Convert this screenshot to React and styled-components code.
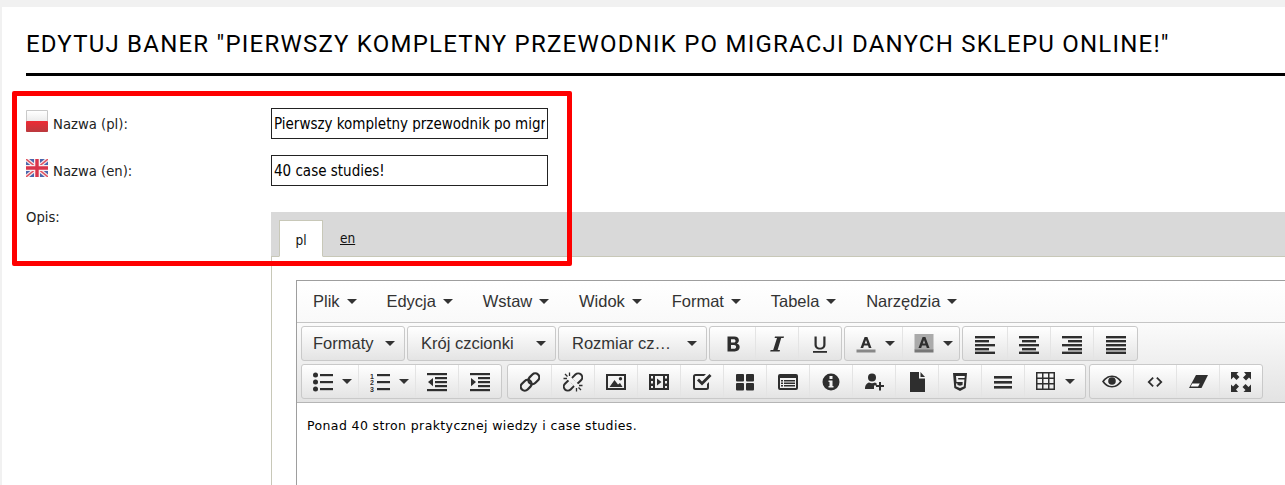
import styled, { createGlobalStyle } from "styled-components";

const GlobalStyle = createGlobalStyle`
  html, body { margin: 0; padding: 0; background: #f1f1f1; overflow: hidden; }
  body { height: 485px; }
`;

const Page = styled.div`
  position: relative;
  width: 1283px;
  height: 478px;
  margin: 7px 0 0 2px;
  background: #fff;
  overflow: hidden;
  font-family: "DejaVu Sans", sans-serif;
  font-stretch: condensed;
  color: #1a1a1a;
`;

const Title = styled.h1`
  margin: 0 0 0 24px;
  height: 69px;
  box-sizing: border-box;
  padding-top: 22px;
  border-bottom: 3px solid #000;
  font: 400 24px/30px Roboto, sans-serif;
  font-stretch: normal;
  letter-spacing: 1.22px;
  color: #000;
  white-space: nowrap;
`;

const Form = styled.div`
  padding: 32px 0 0 24px;
`;

const Row = styled.div`
  display: grid;
  grid-template-columns: 245px 277px;
  height: 47px;
`;

const Label = styled.label`
  display: flex;
  align-items: center;
  gap: 5px;
  height: 31px;
  font-size: 14.7px;
  color: #222;
`;

const FlagBox = styled.span`
  display: flex;
  margin-bottom: 5px;
`;

const TextInput = styled.input`
  box-sizing: border-box;
  width: 277px;
  height: 31px;
  padding: 0 2px;
  border: 1px solid #222;
  border-radius: 0;
  outline: none;
  background: #fff;
  font-family: "DejaVu Sans", sans-serif;
  font-stretch: condensed;
  font-size: 15px;
  color: #000;
`;

const EditorRow = styled.div`
  display: grid;
  grid-template-columns: 245px 1100px;
  padding-top: 10px;
`;

const OpisLabel = styled.div`
  font-size: 14.7px;
  color: #222;
  margin-top: -4px;
`;

const Tabs = styled.div`
  display: flex;
  align-items: flex-end;
  height: 45px;
  box-sizing: border-box;
  padding-left: 8px;
  background: #d9d9d9;
  border-bottom: 1px solid #c8c8b8;
`;

const Tab = styled.span`
  box-sizing: border-box;
  width: ${(p) => (p.$active ? "44px" : "auto")};
  height: ${(p) => (p.$active ? "37px" : "36px")};
  margin-bottom: ${(p) => (p.$active ? "-1px" : "0")};
  margin-left: ${(p) => (p.$active ? "0" : "17px")};
  padding-top: ${(p) => (p.$active ? "11px" : "10px")};
  text-align: center;
  font-size: 13.5px;
  color: #111;
  background: ${(p) => (p.$active ? "#fff" : "transparent")};
  border: ${(p) => (p.$active ? "1px solid #c8c8b8" : "none")};
  border-bottom: ${(p) => (p.$active ? "1px solid #fff" : "none")};
  text-decoration: ${(p) => (p.$active ? "none" : "underline")};
`;

const TabBody = styled.div`
  border-left: 1px solid #c8c8b8;
  padding: 23px 0 0 24px;
  height: 240px;
`;

const Editor = styled.div`
  border: 1px solid #9e9e9e;
  border-right: none;
  height: 240px;
  font-family: "Liberation Sans", Arial, sans-serif;
  font-stretch: normal;
`;

const MenuBar = styled.div`
  display: flex;
  height: 41px;
  align-items: center;
  padding-left: 16px;
  gap: 29.8px;
  background: linear-gradient(#fff, #f9f9f9);
  border-bottom: 1px solid #c5c5c5;
`;

const MenuItem = styled.span`
  display: flex;
  align-items: center;
  gap: 7px;
  font-size: 16.5px;
  color: #333;
`;

const Caret = styled.i`
  display: block;
  flex: none;
  width: 0;
  height: 0;
  border-left: 5px solid transparent;
  border-right: 5px solid transparent;
  border-top: 5px solid #333;
`;

const Toolbar = styled.div`
  height: 80px;
  box-sizing: border-box;
  padding: 3px 0 0 4px;
  background: linear-gradient(#fbfbfb, #e3e3e3);
  border-bottom: 1px solid #b5b5b5;
`;

const ToolRow = styled.div`
  display: flex;
  gap: 2px;
  height: 35px;
  margin-bottom: 3px;
`;

const Group = styled.div`
  display: flex;
  box-sizing: border-box;
  height: 35px;
  margin-left: ${(p) => p.$shift || 0}px;
  border: 1px solid #c9c9c9;
  border-radius: 3px;
  background: linear-gradient(#fff, #e4e4e4);
`;

const ToolButton = styled.div`
  display: flex;
  align-items: center;
  justify-content: ${(p) => (p.$caret ? "flex-start" : "center")};
  gap: 9px;
  box-sizing: border-box;
  width: ${(p) => p.$w || 43}px;
  height: 33px;
  padding-left: ${(p) => (p.$caret ? "11px" : "0")};
  & + & { border-left: 1px solid #e4e4e4; }
`;

const SelectButton = styled.div`
  display: flex;
  align-items: center;
  justify-content: space-between;
  box-sizing: border-box;
  width: ${(p) => p.$w}px;
  height: 33px;
  padding: 0 9px 0 ${(p) => p.$pad || 13}px;
  font-size: 16.5px;
  color: #333;
`;

const Content = styled.div`
  padding: 15px 10px;
  font: 12.5px/16px "DejaVu Sans", Verdana, sans-serif;
  letter-spacing: 0.39px;
  color: #000;
`;

// red frame drawn over the form in the screenshot
const Highlight = styled.div`
  position: absolute;
  left: 10px;
  top: 84px;
  width: 560px;
  height: 175px;
  box-sizing: border-box;
  border: 5px solid #fe0000;
  border-radius: 2px;
  pointer-events: none;
`;

const Svg = ({ children }) => (
  <svg width="20" height="20" viewBox="0 0 20 20" fill="#2e2e2e" stroke="none">{children}</svg>
);

const FlagPl = () => (
  <svg width="22" height="22" viewBox="0 0 22 22">
    <defs>
      <linearGradient id="plWhite" x1="0" y1="0" x2="0" y2="1">
        <stop offset="0" stopColor="#fff" />
        <stop offset="1" stopColor="#ececec" />
      </linearGradient>
      <linearGradient id="plRed" x1="0" y1="0" x2="0" y2="1">
        <stop offset="0" stopColor="#ee2a34" />
        <stop offset="1" stopColor="#bb3a3e" />
      </linearGradient>
    </defs>
    <rect width="22" height="22" rx="1" fill="#c9c9c9" />
    <rect x="1" y="1" width="20" height="10" fill="url(#plWhite)" />
    <rect y="11" width="22" height="11" rx="1" fill="url(#plRed)" />
  </svg>
);

const FlagEn = () => (
  <svg width="22" height="18" viewBox="0 0 22 18">
    <rect width="22" height="18" fill="#4a66ad" />
    <path d="M0 0 22 18M22 0 0 18" stroke="#f4e8ea" strokeWidth="4" />
    <path d="M0 0 22 18M22 0 0 18" stroke="#e0505f" strokeWidth="1.4" />
    <path d="M11 0V18M0 9H22" stroke="#f7eef0" strokeWidth="6" />
    <path d="M11 0V18M0 9H22" stroke="#d9354a" strokeWidth="3.4" />
  </svg>
);

const Lines = ({ rows }) => (
  <Svg>
    {rows.map(([x, y, w, t = 2.4], i) => <rect key={i} x={x} y={y} width={w} height={t} />)}
  </Svg>
);

const letterA = "M8.600 3h2.800l4.100 11h-2.700l-.8-2.400H8l-.8 2.400H4.500L8.600 3zm1.400 3L8.700 9.600h2.600L10 6z";

const icons = {
  bold: <Svg><path d="M4.500 2.500h6.800c2.900 0 4.600 1.400 4.600 3.800 0 1.500-.8 2.700-2.100 3.200 1.700.4 2.900 1.700 2.900 3.600 0 2.700-2 4.400-5 4.400H4.500v-15zm3.500 2.800v3.200h2.600c1.200 0 1.900-.6 1.900-1.600s-.7-1.600-1.900-1.600H8zm0 5.800v3.600h3c1.300 0 2.100-.7 2.100-1.800s-.8-1.800-2.100-1.800H8z" /></Svg>,
  italic: <Svg><path d="M8 2.500h9l-.4 1.400h-2.400L10.600 16h2.400l-.4 1.500H3.200l.4-1.500h2.600L10 3.900H7.600z" /></Svg>,
  underline: <Svg><path d="M4.500 2.500h2.200v8c0 2.200 1.300 3.200 3.300 3.200s3.300-1 3.300-3.200v-8h2.200v8c0 3.200-2.200 5-5.500 5s-5.500-1.800-5.500-5v-8z" /><rect x="3" y="17" width="14" height="1.800" /></Svg>,
  color: <Svg><path d={letterA} /><rect x="0.500" y="15.500" width="19" height="3" fill="#888" /></Svg>,
  bg: <Svg><rect x="0.500" y="0" width="19" height="16" fill="#aaa" /><path d={letterA} /><rect x="0.500" y="15.500" width="19" height="3" fill="#777" /></Svg>,
  left: <Lines rows={[[0, 2, 20], [0, 6, 14], [0, 10, 20], [0, 14, 14], [0, 17.600, 20]]} />,
  center: <Lines rows={[[0, 2, 20], [3, 6, 14], [0, 10, 20], [3, 14, 14], [0, 17.600, 20]]} />,
  right: <Lines rows={[[0, 2, 20], [6, 6, 14], [0, 10, 20], [6, 14, 14], [0, 17.600, 20]]} />,
  justify: <Lines rows={[[0, 2, 20], [0, 6, 20], [0, 10, 20], [0, 14, 20], [0, 17.600, 20]]} />,
  bullist: <Svg><circle cx="2.500" cy="3" r="2.500" /><circle cx="2.500" cy="10" r="2.500" /><circle cx="2.500" cy="17" r="2.500" /><rect x="7" y="2" width="13" height="2.200" /><rect x="7" y="9" width="13" height="2.200" /><rect x="7" y="16" width="13" height="2.200" /></Svg>,
  numlist: <Svg><text x="0" y="6.500" fontSize="7" fontWeight="700" fontFamily="Liberation Sans">1</text><text x="0" y="13" fontSize="7" fontWeight="700" fontFamily="Liberation Sans">2</text><text x="0" y="19.500" fontSize="7" fontWeight="700" fontFamily="Liberation Sans">3</text><rect x="7" y="2" width="13" height="2.200" /><rect x="7" y="9" width="13" height="2.200" /><rect x="7" y="16" width="13" height="2.200" /></Svg>,
  outdent: <Svg><rect y="1" width="20" height="2.200" /><rect x="8" y="5" width="12" height="2.200" /><rect x="8" y="9" width="12" height="2.200" /><rect x="8" y="13" width="12" height="2.200" /><rect y="17" width="20" height="2.200" /><path d="M6 6v8.200L1 10z" /></Svg>,
  indent: <Svg><rect y="1" width="20" height="2.200" /><rect x="8" y="5" width="12" height="2.200" /><rect x="8" y="9" width="12" height="2.200" /><rect x="8" y="13" width="12" height="2.200" /><rect y="17" width="20" height="2.200" /><path d="M1 6v8.200l5-4.100z" /></Svg>,
  link: <Svg><g fill="none" stroke="#2e2e2e" strokeWidth="2.200"><rect x="9.800" y="0.800" width="8" height="12" rx="4" transform="rotate(45 13.800 6.800)" /><rect x="2.200" y="7.200" width="8" height="12" rx="4" transform="rotate(45 6.200 13.200)" /></g></Svg>,
  unlink: (
    <Svg>
      <mask id="unlinkGap">
        <rect width="20" height="20" fill="#fff" />
        <path d="M5 5 15 15" stroke="#000" strokeWidth="4" />
      </mask>
      <g fill="none" stroke="#2e2e2e" strokeWidth="2" mask="url(#unlinkGap)">
        <rect x="9.800" y="0.800" width="8" height="12" rx="4" transform="rotate(45 13.800 6.800)" />
        <rect x="2.200" y="7.200" width="8" height="12" rx="4" transform="rotate(45 6.200 13.200)" />
      </g>
      <g fill="none" stroke="#2e2e2e" strokeWidth="1.300">
        <path d="M6.500 .5v3.500M.5 6.500H4M2 2l2.500 2.500M13.500 19.500V16M19.500 13.500H16M18 18l-2.500-2.500" />
      </g>
    </Svg>
  ),
  image: <Svg><path fillRule="evenodd" d="M0 2h20v16H0zM2 4v12h16V4z" /><path d="M3.500 15l5-7 3.500 4.500 2-1.500 2.500 4z" /><circle cx="14.500" cy="6.800" r="1.700" /></Svg>,
  media: <Svg><path fillRule="evenodd" d="M0 2h20v16H0zM2 4v2.500h2V4zM2 9v2.500h2V9zM2 14v2h2v-2zM16 4v2.500h2V4zM16 9v2.500h2V9zM16 14v2h2v-2zM6 4v12h8V4z" /><path d="M8 6.500v7l4.500-3.500z" /></Svg>,
  check: <Svg><path d="M3.500 2H14l-2 2H3.500C3.200 4 3 4.200 3 4.500v11c0 .3.200.5.500.5h11c.3 0 .5-.2.500-.5V12l2-2v5.500a2.500 2.500 0 0 1-2.500 2.500h-11A2.500 2.500 0 0 1 1 15.500v-11A2.500 2.500 0 0 1 3.500 2z" /><path d="M5 8.500l2-2 3 3 7.500-7.500 2 2L10 13.500z" /></Svg>,
  grid: <Svg><rect x="1" y="2" width="8" height="7.500" rx="1" /><rect x="11" y="2" width="8" height="7.500" rx="1" /><rect x="1" y="11" width="8" height="7.500" rx="1" /><rect x="11" y="11" width="8" height="7.500" rx="1" /></Svg>,
  template: <Svg><path fillRule="evenodd" d="M2 2h16a2 2 0 0 1 2 2v12a2 2 0 0 1-2 2H2a2 2 0 0 1-2-2V4a2 2 0 0 1 2-2zM2 6v10h16V6z" /><rect x="3" y="8" width="2" height="1.500" /><rect x="6" y="8" width="11" height="1.500" /><rect x="3" y="10.500" width="2" height="1.500" /><rect x="6" y="10.500" width="11" height="1.500" /><rect x="3" y="13" width="2" height="1.500" /><rect x="6" y="13" width="11" height="1.500" /></Svg>,
  info: <Svg><path fillRule="evenodd" d="M10 1.500a8.500 8.500 0 1 1 0 17 8.500 8.500 0 0 1 0-17zM8.500 4v3h3V4zM7.500 8.500V10h1v4h-1v1.500h5V14h-1V8.500z" /></Svg>,
  user: <Svg><circle cx="8" cy="5.500" r="4" /><path d="M1 17c0-4 2-6 4-6.500 2 1 4 1 6 0 .6.200 1.200.600 1.700 1v2h-2.700v3.500z" /><rect x="12" y="13" width="8" height="2" /><rect x="15" y="10" width="2" height="8.500" /></Svg>,
  doc: <Svg><path d="M3 0h9v6.500h6V20H3z" /><path d="M13.500 0 18 5h-4.500z" /></Svg>,
  html5: <Svg><path fillRule="evenodd" d="M3 1h14l-1.300 15L10 19l-5.700-3zM6 4l.5 6h6.200l-.2 3-2.500.8-2.500-.8-.1-1.500H6l.2 3L10 16l3.800-1.500.6-7H8.300L8.100 6h6.500l.2-2z" /></Svg>,
  hr: <Lines rows={[[1, 4, 18, 2.600], [1, 9, 18, 2.600], [1, 14, 18, 2.600]]} />,
  table: <Svg><path fillRule="evenodd" d="M0 0h19v18H0zM1.500 1.500v4H6v-4zM7.500 1.500v4H12v-4zM13.500 1.500v4h4v-4zM1.500 7v4H6V7zM7.500 7v4H12V7zM13.500 7v4h4V7zM1.500 12.500v4H6v-4zM7.500 12.500v4H12v-4zM13.500 12.500v4h4v-4z" /></Svg>,
  eye: <Svg><path fillRule="evenodd" d="M10 3.500c4.500 0 8 3 10 6-2 3-5.500 6-10 6s-8-3-10-6c2-3 5.500-6 10-6zM10 5c-3.300 0-6 2-7.900 4.500C4 12 6.700 14 10 14s6-2 7.900-4.500C16 7 13.300 5 10 5z" /><circle cx="10" cy="9" r="3.800" /></Svg>,
  code: <Svg><path d="M7.500 5 8.800 6.300 5 10l3.800 3.700L7.500 15l-5-5zM12.500 5l5 5-5 5-1.300-1.300L15 10l-3.800-3.700z" /></Svg>,
  eraser: <Svg><path d="M8 3h12l-6.500 13H1z" /><path d="M4.300 11.500h7.500l-1.700 3H2.600z" fill="#fff" /></Svg>,
  fullscreen: <Svg><path d="M0 0h7.500L5.500 2l3 3-3 3-3-3-2.500 2.500zM20 0v7.500L18 5.500l-3 3-3-3 3-3L13 0zM0 20v-7.500L2 14.500l3-3 3 3-3 3 2 2.500zM20 20h-7.500l2-2-3-3 3-3 3 3 2.500-2.500z" /></Svg>,
};

const menus = ["Plik", "Edycja", "Wstaw", "Widok", "Format", "Tabela", "Narzędzia"];

const row2a = [["bullist", 56, true], ["numlist", 57, true], ["outdent", 43], ["indent", 43]];
const row2b = ["link", "unlink", "image", "media", "check", "grid", "template", "info", "user", "doc", "html5", "hr"];
const row2c = ["eye", "code", "eraser", "fullscreen"];

function Tool({ name, w, caret }) {
  return (
    <ToolButton $w={w} $caret={caret}>
      {icons[name]}
      {caret && <Caret />}
    </ToolButton>
  );
}

export default function App() {
  return (
    <Page>
      <GlobalStyle />
      <Title>EDYTUJ BANER "PIERWSZY KOMPLETNY PRZEWODNIK PO MIGRACJI DANYCH SKLEPU ONLINE!"</Title>
      <Form>
        <Row>
          <Label><FlagBox><FlagPl /></FlagBox>Nazwa (pl):</Label>
          <TextInput readOnly value="Pierwszy kompletny przewodnik po migracji danych sklepu online!" />
        </Row>
        <Row>
          <Label><FlagBox><FlagEn /></FlagBox>Nazwa (en):</Label>
          <TextInput readOnly value="40 case studies!" />
        </Row>
        <EditorRow>
          <OpisLabel>Opis:</OpisLabel>
          <div>
            <Tabs>
              <Tab $active>pl</Tab>
              <Tab>en</Tab>
            </Tabs>
            <TabBody>
              <Editor>
                <MenuBar>
                  {menus.map((m) => <MenuItem key={m}>{m}<Caret /></MenuItem>)}
                </MenuBar>
                <Toolbar>
                  <ToolRow>
                    <Group><SelectButton $w={102} $pad={11}>Formaty<Caret /></SelectButton></Group>
                    <Group><SelectButton $w={147}>Krój czcionki<Caret /></SelectButton></Group>
                    <Group><SelectButton $w={147}>Rozmiar cz…<Caret /></SelectButton></Group>
                    <Group>
                      <Tool name="bold" w={45} /><Tool name="italic" /><Tool name="underline" />
                    </Group>
                    <Group>
                      <Tool name="color" w={57} caret /><Tool name="bg" w={57} caret />
                    </Group>
                    <Group>
                      <Tool name="left" w={44} /><Tool name="center" /><Tool name="right" /><Tool name="justify" w={44} />
                    </Group>
                  </ToolRow>
                  <ToolRow>
                    <Group>
                      {row2a.map(([n, w, c]) => <Tool key={n} name={n} w={w} caret={c} />)}
                    </Group>
                    <Group $shift={3}>
                      {row2b.map((n) => <Tool key={n} name={n} />)}
                      <Tool name="table" w={61} caret />
                    </Group>
                    <Group $shift={1}>
                      {row2c.map((n) => <Tool key={n} name={n} />)}
                    </Group>
                  </ToolRow>
                </Toolbar>
                <Content>Ponad 40 stron praktycznej wiedzy i case studies.</Content>
              </Editor>
            </TabBody>
          </div>
        </EditorRow>
      </Form>
      <Highlight />
    </Page>
  );
}
